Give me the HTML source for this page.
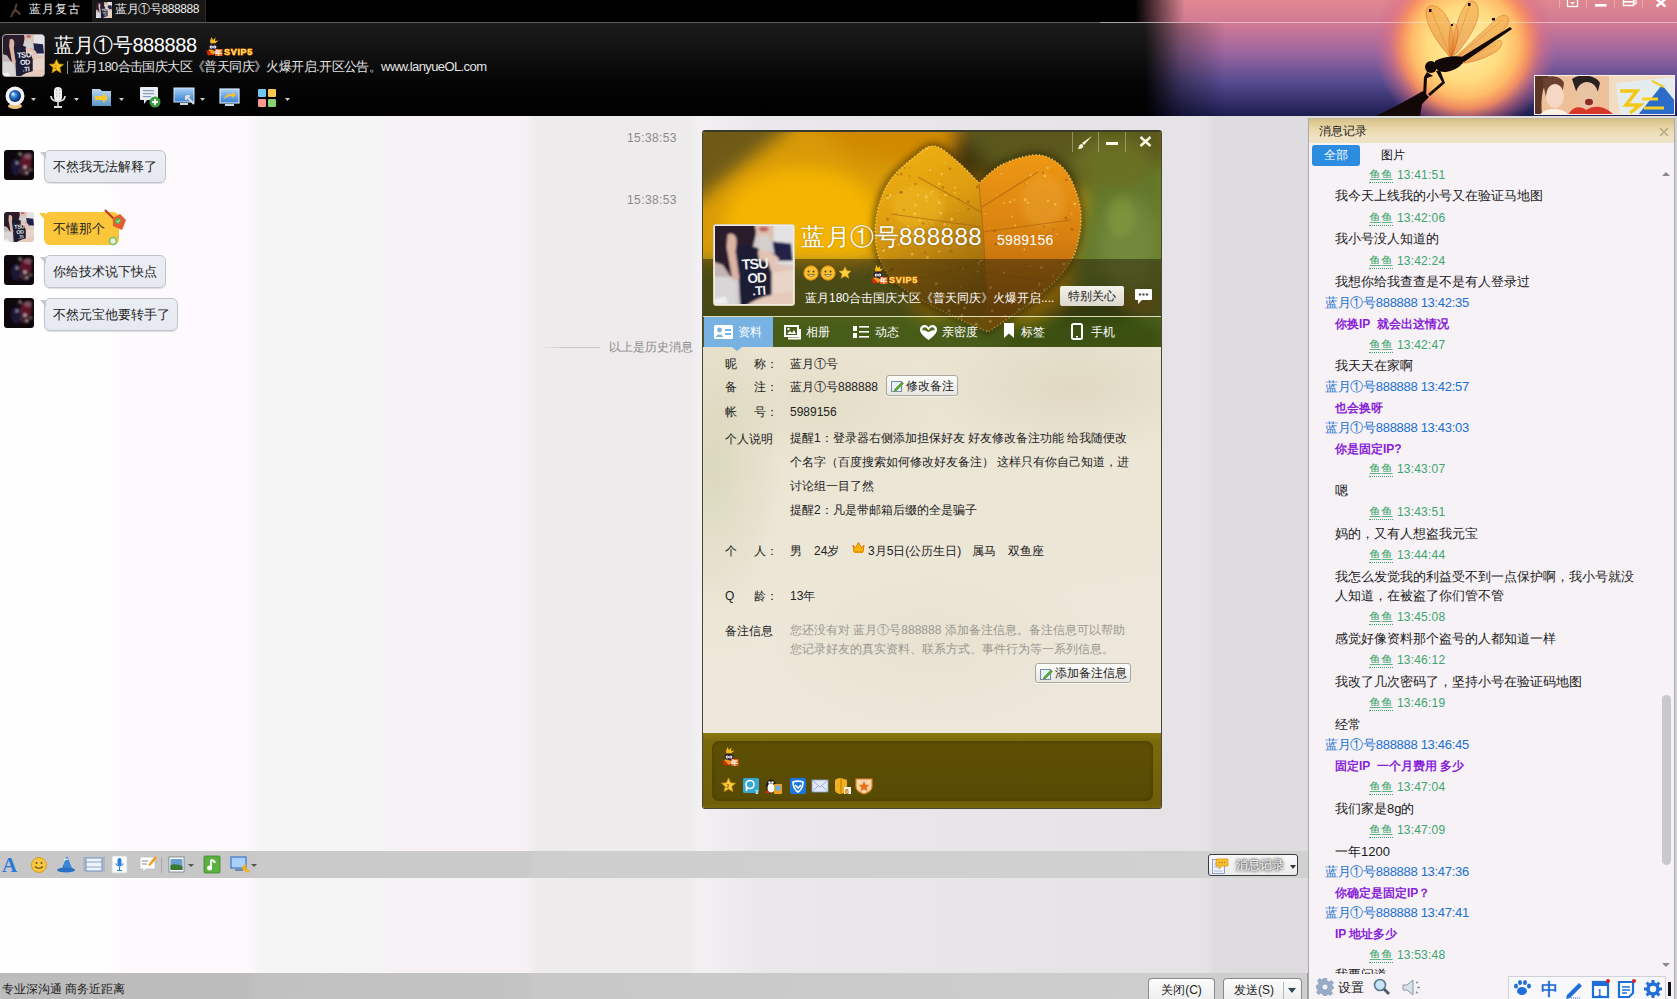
<!DOCTYPE html>
<html><head><meta charset="utf-8">
<style>
*{box-sizing:border-box;margin:0;padding:0}
html,body{width:1677px;height:999px;overflow:hidden;font-family:"Liberation Sans",sans-serif;font-size:13px;color:#222}
.a{position:absolute}
#hdr{left:0;top:0;width:1677px;height:116px;background:#000;overflow:hidden}
#chat{left:0;top:116px;width:1308px;height:735px;background:linear-gradient(90deg,#fefefe 0,#fefefe 108px,#fdf9fd 124px,#fdf9fd 245px,#f6f5f6 260px,#f6f5f6 380px,#f5f1f4 392px,#f5f1f4 525px,#eeebed 537px,#eeebed 690px,#f2f0f2 700px,#ebe8eb 760px,#e8e5e8 1000px,#e6e3e6 1162px,#e6e3e6 1205px,#dfdcdf 1215px,#dfdcdf 1308px)}
#tb2{left:0;top:851px;width:1308px;height:27px;background:linear-gradient(90deg,#c8c7c8 0,#c8c7c8 245px,#cacaca 260px,#cbcacb 525px,#cfcecf 537px,#d2d1d2 1308px)}
#inp{left:0;top:878px;width:1308px;height:95px;background:linear-gradient(90deg,#fefefe 0,#fefefe 108px,#fdf9fd 124px,#fdf9fd 245px,#f6f5f6 260px,#f6f5f6 380px,#f5f1f4 392px,#f5f1f4 525px,#eeebed 537px,#eeebed 690px,#f2f0f2 700px,#ebe8eb 760px,#e8e5e8 1000px,#e6e3e6 1162px,#e6e3e6 1205px,#dfdcdf 1215px,#dfdcdf 1308px)}
#bot{left:0;top:973px;width:1308px;height:26px;background:linear-gradient(90deg,#bdbcbd 0,#bdbcbd 245px,#c2c1c2 260px,#c4c3c4 525px,#c9c8c9 537px,#d0cfd0 1308px)}
#rp{left:1308px;top:116px;width:369px;height:883px;background:#f6f3f6}
#card{left:702px;top:130px;width:460px;height:679px}

.av{left:4px;width:30px;height:30px;border-radius:3px;background:radial-gradient(circle at 60% 45%,#6a2a30 0,#3a1820 40%,#180c12 100%)}
.av2{left:4px;width:30px;height:30px;border-radius:3px;background:linear-gradient(150deg,#b8a0a0 0,#6a5058 40%,#2a2035 60%,#c8b8b0 100%)}
.bub{left:44px;height:33px;border:1px solid #bfc4cc;border-radius:6px;background:linear-gradient(180deg,#eceef5,#e6e9f0);box-shadow:0 1px 1px rgba(0,0,0,.12);padding-left:8px;line-height:31px;font-size:13px;color:#222;white-space:nowrap}
.bub::before{content:"";position:absolute;left:-5px;top:1px;width:0;height:0;border-left:6px solid transparent;border-top:7px solid #c4c8d0}
.bubY{left:44px;height:33px;border-radius:6px;background:#fcc63a;padding-left:9px;line-height:33px;font-size:13px;color:#222;white-space:nowrap}
.bubY::before{content:"";position:absolute;left:-5px;top:1px;border-left:6px solid transparent;border-top:7px solid #fcc63a}

.rg{left:61px;height:20px;line-height:22px;font-size:12px;color:#3da56d;white-space:nowrap;letter-spacing:0.2px}
.yu{border-bottom:1px dotted #3da56d}
.rb{left:17px;height:20px;line-height:20px;font-size:13px;color:#2070d0;white-space:nowrap;letter-spacing:-0.3px}
.rpur{left:27px;height:20px;line-height:20px;font-size:12px;font-weight:bold;color:#8a1fd8;white-space:nowrap}
.rk{left:27px;height:20px;line-height:20px;font-size:13px;color:#1a1a1a;white-space:nowrap}

.tab{top:186px;height:31px;display:flex;align-items:center}
.ti{display:inline-block;box-sizing:border-box}
.tabt{top:185px;line-height:30px;color:#fff;font-size:12px}
.t12{font-size:12px;line-height:18px;color:#222;white-space:nowrap}
.lbl{left:23px;font-size:12px;line-height:18px;color:#222;white-space:nowrap}
.val{left:88px;font-size:12px;line-height:18px;color:#222;white-space:nowrap}
.btn{border:1px solid #a8a8a0;border-radius:3px;background:linear-gradient(#fdfdfb,#e8e6e0);font-size:12px;line-height:18px;color:#222;box-shadow:0 1px 0 rgba(255,255,255,.6)}
.ic{top:647px;width:16px;height:16px;border-radius:2px}
.bbtn{height:24px;border:1px solid #8a8a8a;border-radius:4px 4px 0 0;border-bottom:none;background:linear-gradient(#fdfdfd,#ececec);font-size:12px;line-height:22px;text-align:center;color:#222}
</style></head><body>
<svg width="0" height="0" style="position:absolute"><defs>
<symbol id="girl" viewBox="0 0 80 80">
 <filter id="bl" x="-10%" y="-10%" width="120%" height="120%"><feGaussianBlur stdDeviation="1.3"/></filter>
 <g filter="url(#bl)">
 <rect x="-4" y="-4" width="88" height="88" fill="#d4ccd0"/>
 <path d="M-4 28 L22 30 L22 84 H-4Z" fill="#c4b4b4"/>
 <path d="M-4 52 H22 V84 H-4Z" fill="#d8d6d6"/>
 <path d="M-4 -4 H44 C42 10 40 20 36 30 L26 48 L16 52 L8 40 L-4 36Z" fill="#2c1e2c"/>
 <path d="M40 -4 H62 V14 L44 14Z" fill="#dcc0b0"/>
 <ellipse cx="50" cy="3" rx="5" ry="2.6" fill="#c06068"/>
 <path d="M60 -4 H84 V40 L60 38Z" fill="#e4e2e4"/>
 <path d="M59 16 L78 18 L80 36 L62 36Z" fill="#24244a"/>
 <path d="M22 18 C30 20 40 20 46 24 L60 28 L62 44 L60 84 H26 L24 50Z" fill="#1c1a34"/>
 <path d="M13 9 C18 6 23 10 22 18 L21 26 L25 54 L18 56 C16 44 14 32 12 22Z" fill="#dcb4a4"/>
 <rect x="45" y="10" width="11" height="17" rx="2" fill="#d4d0cc"/>
 <path d="M44 26 C50 24 60 26 66 34 L60 40 C56 36 50 36 45 34Z" fill="#e4c4b4"/>
 <path d="M54 36 L80 42 V50 L58 48Z" fill="#e2c6b8"/>
 <path d="M58 48 L84 44 V84 H58Z" fill="#e8d4c8"/>
 <path d="M30 84 C40 74 56 70 84 66 V84Z" fill="#e6cabc"/>
 <path d="M-2 76 L10 72 L14 80 H-2Z" fill="#f0f0f0"/>
 </g>
 <g font-family="Liberation Sans" font-weight="bold" fill="#eeeeee" transform="rotate(-4 42 50)">
 <text x="28" y="44" font-size="15" letter-spacing="-1">TSU</text>
 <text x="33" y="58" font-size="14" letter-spacing="-1">OD</text>
 <text x="37" y="71" font-size="13" letter-spacing="-.5">.TI</text>
 </g>
</symbol>
<symbol id="svip" viewBox="0 0 50 20">
 <path d="M7 5 L8.5 1 L10 4 L12.5 1.5 L12 5 L15.5 4.5 L12 7.5 H7.5Z" fill="#f8b818"/>
 <ellipse cx="10" cy="11" rx="4.5" ry="3.5" fill="#2a2030"/>
 <circle cx="8.3" cy="11" r="1.6" fill="#fff"/><circle cx="11.7" cy="11" r="1.6" fill="#fff"/><circle cx="8.3" cy="11" r=".6" fill="#222"/><circle cx="11.7" cy="11" r=".6" fill="#222"/>
 <path d="M3 14 L12 18.5 L5 19.5 Z" fill="#d82808"/><path d="M5 14 C8 13 11 14 13 16 L10 19 Z" fill="#f89818"/>
 <path d="M12 13 H19.5 V20 H12Z" fill="#e86010"/>
 <text x="12.3" y="19.2" font-size="7" font-weight="bold" font-family="Liberation Sans" fill="#fff">年</text>
 <text x="21" y="18.5" font-size="9" font-weight="bold" font-family="Liberation Sans" fill="#ffe070" stroke="#e87000" stroke-width="1" paint-order="stroke" letter-spacing=".7">SVIP5</text>
</symbol>
<symbol id="dark" viewBox="0 0 30 30">
 <filter id="bd"><feGaussianBlur stdDeviation=".9"/></filter>
 <rect width="30" height="30" fill="#0e070c"/>
 <g filter="url(#bd)">
 <ellipse cx="12" cy="17" rx="5" ry="9" fill="#1e1a3a" opacity=".9"/>
 <ellipse cx="22" cy="12" rx="6" ry="8" fill="#6a1a30" opacity=".85"/>
 <ellipse cx="24" cy="6" rx="4" ry="3" fill="#9a6a78" opacity=".7"/>
 <ellipse cx="20" cy="21" rx="5" ry="4" fill="#4a2a38" opacity=".8"/>
 <circle cx="16" cy="4" r="1.8" fill="#c0c0b0" opacity=".7"/>
 <circle cx="13" cy="13" r="1.4" fill="#d0d0e0" opacity=".7"/>
 <circle cx="21" cy="17" r="1.6" fill="#f0e8e8" opacity=".8"/>
 <circle cx="23" cy="23" r="1.5" fill="#e8e0e0" opacity=".7"/>
 <circle cx="27" cy="20" r="1.5" fill="#c8a8a0" opacity=".6"/>
 </g>
</symbol>
</defs></svg>

<div id="hdr" class="a">
 <div class="a" style="left:0;top:0;width:1677px;height:22px;background:#000"></div>
 <div class="a" style="left:0;top:22px;width:1677px;height:94px;background:linear-gradient(180deg,#1d1d1d 0,#111 30px,#050505 60px,#000 94px)"></div>
 <div class="a" style="left:0;top:22px;width:1677px;height:1px;background:#5a5a5a"></div>
 <!-- sky -->
 <svg class="a" style="left:1100px;top:0" width="577" height="116" viewBox="1100 0 577 116">
  <defs>
   <linearGradient id="sk" x1="0" y1="0" x2="0" y2="1"><stop offset="0" stop-color="#e08890"/><stop offset=".2" stop-color="#d27a94"/><stop offset=".45" stop-color="#9c66a0"/><stop offset=".7" stop-color="#584c90"/><stop offset="1" stop-color="#1c1c50"/></linearGradient>
   <linearGradient id="fadeL" x1="0" y1="0" x2="1" y2="0"><stop offset="0" stop-color="#000" stop-opacity="1"/><stop offset=".35" stop-color="#000" stop-opacity=".85"/><stop offset="1" stop-color="#000" stop-opacity="0"/></linearGradient>
   <radialGradient id="sun" cx="1465" cy="44" r="92" gradientUnits="userSpaceOnUse"><stop offset="0" stop-color="#fff0a8"/><stop offset=".4" stop-color="#ffdc80"/><stop offset=".58" stop-color="#ffbc68"/><stop offset=".7" stop-color="#f89060" stop-opacity=".95"/><stop offset=".84" stop-color="#e07080" stop-opacity=".5"/><stop offset="1" stop-color="#c06890" stop-opacity="0"/></radialGradient>
   <linearGradient id="mL" x1="1145" y1="0" x2="1225" y2="0" gradientUnits="userSpaceOnUse"><stop offset="0" stop-color="#fff" stop-opacity="0"/><stop offset=".45" stop-color="#fff" stop-opacity=".65"/><stop offset="1" stop-color="#fff" stop-opacity="1"/></linearGradient>
   <linearGradient id="mT" x1="1135" y1="0" x2="1185" y2="0" gradientUnits="userSpaceOnUse"><stop offset="0" stop-color="#fff" stop-opacity="0"/><stop offset="1" stop-color="#fff" stop-opacity="1"/></linearGradient>
   <mask id="mk" maskUnits="userSpaceOnUse" x="1100" y="0" width="577" height="116"><rect x="1100" y="0" width="577" height="22" fill="url(#mT)"/><rect x="1100" y="22" width="577" height="94" fill="url(#mL)"/></mask>
   <linearGradient id="wing" x1="0" y1="1" x2="0" y2="0"><stop offset="0" stop-color="#e07020" stop-opacity=".55"/><stop offset="1" stop-color="#f0a040" stop-opacity=".45"/></linearGradient>
  </defs>
  <g mask="url(#mk)"><rect x="1100" y="0" width="577" height="116" fill="url(#sk)"/>
  <rect x="1100" y="0" width="577" height="116" fill="url(#sun)"/></g>
  <rect x="1100" y="22" width="577" height="1" fill="#fff" opacity=".45"/>
  <g fill="url(#wing)" stroke="#c85a18" stroke-width=".6" stroke-opacity=".7">
   <path d="M1449 56 C1440 46 1425 26 1426 11 C1427 3 1438 4 1445 14 C1454 28 1456 45 1452 56Z"/>
   <path d="M1451 55 C1452 40 1458 13 1467 3 C1474 -3 1480 5 1478 17 C1474 33 1462 48 1453 57Z"/>
   <path d="M1450 56 C1448 46 1449 32 1451 25 C1453 21 1457 24 1458 30 C1458 40 1455 50 1451 57Z"/>
   <path d="M1454 58 C1468 46 1487 27 1499 17 C1507 12 1512 19 1506 27 C1494 41 1474 54 1456 61Z"/>
   <path d="M1456 61 C1470 56 1487 47 1497 41 C1503 38 1504 45 1497 51 C1485 59 1469 64 1457 63Z"/>
  </g>
  <g stroke="#c86018" stroke-width=".5" opacity=".6" fill="none"><path d="M1450 55 L1432 12 M1452 55 L1470 5 M1455 59 L1502 20 M1458 62 L1496 45"/></g>
  <g fill="#130808">
   <circle cx="1431" cy="67" r="6"/>
   <path d="M1435 61 C1442 57 1455 55 1464 57 C1466 62 1458 70 1446 72 C1440 72 1436 70 1435 66Z"/>
   <path d="M1460 58 L1510 27 L1512 29 L1464 62Z"/>
   <path d="M1427 72 L1424 77 L1423 96 L1426 96 L1427 78 L1433 76Z"/>
   <path d="M1436 71 L1442 82 L1428 94 L1430 96 L1445 83 L1440 70Z"/>
   <path d="M1376 116 C1392 108 1408 100 1423 91 L1429 97 L1422 104 L1420 116Z"/>
   <rect x="1429" y="9" width="2.5" height="3"/><rect x="1468" y="3" width="2.5" height="3"/><rect x="1451" y="24" width="2" height="2"/><rect x="1492" y="18" width="3" height="2.5"/>
  </g>
 </svg>
 <svg class="a" style="left:1534px;top:75px" width="141" height="40" viewBox="0 0 141 40">
  <rect width="141" height="40" fill="#f2dcc4"/>
  <rect x="0" y="0" width="75" height="40" fill="#eec09a"/>
  <path d="M0 0 H16 C10 8 6 20 8 40 H0Z" fill="#5a3424"/>
  <path d="M8 4 C14 0 26 0 30 8 L28 20 L12 22Z" fill="#6a4030"/>
  <ellipse cx="21" cy="21" rx="9" ry="12" fill="#f4d8c4"/>
  <path d="M6 40 C10 32 30 32 34 40Z" fill="#faf0e4"/>
  <path d="M38 4 C46 -2 62 0 66 8 L64 16 L42 16Z" fill="#2a2020"/>
  <ellipse cx="53" cy="20" rx="11" ry="13" fill="#e8c4a4"/>
  <ellipse cx="55" cy="27" rx="4" ry="3.2" fill="#902828"/>
  <path d="M34 40 C38 32 46 30 52 35 C60 30 70 30 80 40Z" fill="#d8382a"/>
  <path d="M82 8 L141 2 V40 H86Z" fill="#e4ecf0"/>
  <path d="M104 40 L128 10 L141 26 V40Z" fill="#2c6cc8"/>
  <path d="M86 16 H103 L92 30 H106 L96 38" stroke="#f2c818" stroke-width="3.5" fill="none"/>
  <path d="M108 24 H124 M110 33 H130" stroke="#f8d020" stroke-width="3"/>
  <path d="M118 6 L130 12" stroke="#f0d030" stroke-width="2.5"/>
  <rect x=".5" y=".5" width="140" height="39" fill="none" stroke="#f8f0e8" stroke-width="1"/>
 </svg>
  <!-- wtabs -->
 <div class="a" style="left:92px;top:0;width:114px;height:22px;background:#171717;border-right:1px solid #2a2a2a;border-left:1px solid #1a1a1a"></div>
 <svg class="a" style="left:9px;top:3px" width="16" height="15" viewBox="0 0 16 15"><path d="M8 1 C6 3 7 5 6 7 C4 9 3 11 2 14 M6 7 C8 8 10 9 11 12" stroke="#5a4030" stroke-width="2" fill="none"/></svg>
 <div class="a" style="left:29px;top:1px;color:#ececec;font-size:12px;line-height:16px;letter-spacing:1px">蓝月复古</div>
 <svg class="a" style="left:96px;top:2px" width="16" height="16"><use href="#girl"/></svg>
 <div class="a" style="left:115px;top:1px;color:#ececec;font-size:12px;line-height:16px;letter-spacing:-0.4px">蓝月①号888888</div>
 <!-- window controls -->
 <svg class="a" style="left:1555px;top:0" width="122" height="12" viewBox="0 0 122 12">
  <g stroke="rgba(255,255,255,.3)" stroke-width="1"><path d="M4.5 0V8M31.5 0V8M59.5 0V8M87.5 0V8"/></g>
  <rect x="12.5" y="-1" width="10" height="7.5" fill="none" stroke="#fff" stroke-width="1.3"/><path d="M15 2 L20 2 L17.5 4.5Z" fill="#fff"/>
  <rect x="40" y="4" width="11.5" height="2.6" fill="#fff"/>
  <rect x="68.5" y="-1" width="10" height="6.5" fill="none" stroke="#fff" stroke-width="1.4"/><rect x="68.5" y="1" width="10" height="1.6" fill="#fff"/><path d="M79 -1 V4 H81 V-1" fill="none" stroke="#fff" stroke-width="1.2"/>
  <path d="M101.5 -1 L110.5 6.5 M110.5 -1 L101.5 6.5" stroke="#fff" stroke-width="2.4"/>
 </svg>
 <!-- avatar + name -->
 <div class="a" style="left:2px;top:34px;width:43px;height:43px;border:1px solid #a8a0a0;border-radius:4px;overflow:hidden;background:#ddd"><svg width="41" height="41" style="display:block"><use href="#girl"/></svg></div>
 <div class="a" style="left:54px;top:31px;color:#fff;font-size:20px;line-height:28px;letter-spacing:-0.4px">蓝月①号888888</div>
 <svg class="a" style="left:203px;top:36px" width="50" height="20"><use href="#svip"/></svg>
 <svg class="a" style="left:49px;top:59px" width="15" height="15" viewBox="0 0 15 15"><path d="M7.5 0.5 L9.6 5 L14.5 5.4 L10.8 8.6 L12 13.8 L7.5 11 L3 13.8 L4.2 8.6 L0.5 5.4 L5.4 5Z" fill="#f8c820" stroke="#c88a00" stroke-width=".8"/><text x="5" y="10" font-size="5" font-family="Liberation Sans" fill="#a05000">2</text></svg>
 <div class="a" style="left:67px;top:61px;width:1px;height:13px;background:#8a9aa8"></div>
 <div class="a" style="left:73px;top:58px;color:#e4e4e4;font-size:13px;line-height:18px;letter-spacing:-0.6px">蓝月180合击国庆大区《普天同庆》火爆开启.开区公告。www.lanyueOL.com</div>
 <!-- toolbar -->
 <svg class="a" style="left:0;top:84px" width="300" height="28" viewBox="0 0 300 28">
  <defs><radialGradient id="cam" cx=".4" cy=".4" r=".6"><stop offset="0" stop-color="#7ac0ff"/><stop offset=".6" stop-color="#1a5ab0"/><stop offset="1" stop-color="#0a2a60"/></radialGradient>
  <linearGradient id="fold" x1="0" y1="0" x2="0" y2="1"><stop offset="0" stop-color="#b8d8f0"/><stop offset="1" stop-color="#5a98c8"/></linearGradient>
  <linearGradient id="mon" x1="0" y1="0" x2="0" y2="1"><stop offset="0" stop-color="#a8d0f8"/><stop offset="1" stop-color="#3a80d0"/></linearGradient></defs>
  <ellipse cx="15" cy="22" rx="7" ry="3" fill="#e8c080"/>
  <circle cx="15" cy="12" r="9.5" fill="#f4f4f4"/><circle cx="15" cy="12" r="6" fill="url(#cam)"/><circle cx="13" cy="10" r="1.5" fill="#cfe8ff"/>
  <path d="M31 14 L36 14 L33.5 17Z" fill="#ccc"/>
  <rect x="54" y="3" width="8" height="14" rx="4" fill="#f0f0f0"/><g fill="#888"><circle cx="56.5" cy="6" r=".6"/><circle cx="59.5" cy="6" r=".6"/><circle cx="56.5" cy="9" r=".6"/><circle cx="59.5" cy="9" r=".6"/><circle cx="56.5" cy="12" r=".6"/><circle cx="59.5" cy="12" r=".6"/></g>
  <path d="M51 12 C51 19 65 19 65 12" stroke="#ddd" stroke-width="1.8" fill="none"/><rect x="57.2" y="18" width="1.6" height="4" fill="#ddd"/><rect x="54" y="22" width="8" height="2" fill="#ddd"/>
  <path d="M74 14 L79 14 L76.5 17Z" fill="#ccc"/>
  <path d="M92 5 H100 L102 7 H111 V22 H92Z" fill="url(#fold)"/><path d="M95 12 H103 V9 L108 14 L103 19 V16 H95Z" fill="#f8c830"/>
  <path d="M119 14 L124 14 L121.5 17Z" fill="#ccc"/>
  <path d="M141 3 H157 Q158 3 158 4 V15 Q158 16 157 16 H147 L144 20 V16 H141 Q140 16 140 15 V4 Q140 3 141 3Z" fill="#e8eef6"/><g fill="#8a9ab0"><rect x="143" y="6" width="11" height="1.2"/><rect x="143" y="9" width="11" height="1.2"/><rect x="143" y="12" width="8" height="1.2"/></g>
  <circle cx="155" cy="18" r="5.5" fill="#3aa040"/><path d="M155 15 V21 M152 18 H158" stroke="#fff" stroke-width="2"/>
  <rect x="174" y="4" width="20" height="14" fill="url(#mon)" stroke="#d8e8f8" stroke-width="1"/><rect x="180" y="19" width="8" height="2" fill="#c8d8e8"/><path d="M186 12 L194 20 M186 12 H190 M186 12 V16" stroke="#ddd" stroke-width="2"/>
  <path d="M200 14 L205 14 L202.5 17Z" fill="#ccc"/>
  <rect x="220" y="5" width="19" height="14" fill="url(#mon)" stroke="#d8e8f8" stroke-width="1.2"/><rect x="225" y="20" width="9" height="2" fill="#c8d8e8"/><path d="M224 15 C225 11 228 10 232 10 V8 L236 11 L232 14 V12 C229 12 226 13 224 15Z" fill="#f8c030"/>
  <rect x="258" y="5" width="8" height="8" rx="1" fill="#70c8f0"/><rect x="268" y="5" width="8" height="8" rx="1" fill="#f8c850"/><rect x="258" y="15" width="8" height="8" rx="1" fill="#f89890"/><rect x="268" y="15" width="8" height="8" rx="1" fill="#88d070"/>
  <path d="M285 14 L290 14 L287.5 17Z" fill="#ccc"/>
 </svg>
</div>
<div id="chat" class="a">
 <div class="a" style="left:627px;top:14px;color:#8a8a8a;font-size:12px;line-height:16px;letter-spacing:.4px">15:38:53</div>
 <div class="a" style="left:627px;top:76px;color:#8a8a8a;font-size:12px;line-height:16px;letter-spacing:.4px">15:38:53</div>
 <svg class="a" style="left:4px;top:34px;border-radius:3px" width="30" height="30"><use href="#dark"/></svg>
 <div class="bub a" style="top:34px;width:122px">不然我无法解释了</div>
 <svg class="a" style="left:4px;top:96px;border-radius:3px" width="30" height="30"><use href="#girl"/></svg>
 <div class="bubY a" style="top:96px;width:75px">不懂那个</div>
 <svg class="a" style="left:103px;top:92px" width="24" height="38" viewBox="0 0 24 38"><path d="M2 2 L14 14" stroke="#c03a20" stroke-width="2.2"/><path d="M10 10 L17 6 L23 12 L19 22 L10 18Z" fill="#e85a30"/><circle cx="15" cy="13" r="3" fill="#5ab040"/><path d="M13.5 13 L14.8 14.2 L16.8 11.8" stroke="#fff" stroke-width=".9" fill="none"/><circle cx="10" cy="33" r="3.5" fill="#e8f0e0" stroke="#78c060" stroke-width="1.6"/><circle cx="14.5" cy="29" r="1" fill="#9ad080"/></svg>
 <svg class="a" style="left:4px;top:139px;border-radius:3px" width="30" height="30"><use href="#dark"/></svg>
 <div class="bub a" style="top:139px;width:122px">你给技术说下快点</div>
 <svg class="a" style="left:4px;top:182px;border-radius:3px" width="30" height="30"><use href="#dark"/></svg>
 <div class="bub a" style="top:182px;width:134px">不然元宝他要转手了</div>
 <div class="a" style="left:540px;top:231px;width:60px;height:1px;background:linear-gradient(90deg,rgba(200,200,200,0),#c8c8c8 40%,#c8c8c8)"></div>
 <div class="a" style="left:609px;top:223px;color:#8a8a8a;font-size:12px;line-height:16px">以上是历史消息</div>
</div>
<div id="tb2" class="a">
 <svg class="a" style="left:0;top:0" width="270" height="27" viewBox="0 0 270 27">
  <text x="2" y="21" font-family="Liberation Serif" font-weight="bold" font-size="21" fill="#2a78d8">A</text>
  <circle cx="39" cy="14" r="7.5" fill="#f8c840" stroke="#d89a20" stroke-width="1"/><circle cx="36.5" cy="12" r="1" fill="#6a4a10"/><circle cx="41.5" cy="12" r="1" fill="#6a4a10"/><path d="M35 15.5 Q39 19 43 15.5" stroke="#6a4a10" stroke-width="1.1" fill="none"/>
  <path d="M58 19 Q66 22 75 19 L72 17 L67 5 L62 17Z" fill="#3a88d8"/><ellipse cx="66" cy="19" rx="9" ry="2.5" fill="#2a70c0"/><path d="M64 9 L68 8" stroke="#fff" stroke-width="1"/>
  <rect x="86" y="7" width="16" height="13" fill="#f0f4fa" stroke="#6a90c0" stroke-width="1"/><path d="M86 11 H102 M86 16 H102" stroke="#6a90c0" stroke-width=".8"/><path d="M84 6 V21 M104 6 V21" stroke="#6a90c0" stroke-width="1" stroke-dasharray="1.5 1"/>
  <rect x="112" y="5" width="15" height="17" rx="1" fill="#fff" stroke="#c8d0d8" stroke-width=".8"/><rect x="117.5" y="7" width="4" height="8" rx="2" fill="#2a80d8"/><path d="M115.5 12.5 Q119.5 18 123.5 12.5 M119.5 16 V19 M117 19.5 H122" stroke="#2a80d8" stroke-width="1.2" fill="none"/>
  <path d="M140 6 H155 V18 H146 L143 21 V18 H140Z" fill="#fff" stroke="#b8c0c8" stroke-width=".8"/><path d="M142 10 H148 M142 13 H147" stroke="#7a8a9a" stroke-width="1"/><path d="M148 14 L155 5 L157 7 L150 15Z" fill="#f0a020"/>
  <rect x="161" y="6" width="1" height="16" fill="#a8a8a8"/>
  <rect x="169" y="6" width="15" height="15" fill="#fff" stroke="#6a7a8a" stroke-width=".8"/><rect x="170.5" y="8" width="12" height="11" fill="#6aa0d0"/><path d="M170.5 19 V14 Q175 12 182.5 15 V19Z" fill="#3a7a30"/>
  <path d="M188 13 L194 13 L191 16Z" fill="#555"/>
  <rect x="204" y="5" width="16" height="17" rx="1" fill="#5ab040" stroke="#3a8a28" stroke-width=".8"/><path d="M211 9 V17 M211 9 Q214 9 215 12" stroke="#fff" stroke-width="1.8" fill="none"/><circle cx="209.5" cy="17" r="2.5" fill="#fff"/>
  <rect x="231" y="6" width="15" height="11" fill="#a8d0f8" stroke="#3a78c8" stroke-width="1.2"/><rect x="235" y="18" width="8" height="2" fill="#6a8ab0"/><path d="M243 15 L249 21 M246 14 L243 17 L247 21" stroke="#f0b020" stroke-width="2" fill="none"/>
  <path d="M251 13 L257 13 L254 16Z" fill="#555"/>
 </svg>
 <div class="a" style="left:1208px;top:3px;width:90px;height:22px;border:1px solid #3a3a3a;border-radius:3px;background:linear-gradient(#fafafa,#ebebeb)"></div>
 <svg class="a" style="left:1212px;top:7px" width="17" height="16" viewBox="0 0 17 16"><rect x=".5" y="1.5" width="12" height="14" fill="#eef2fa" stroke="#7a90c0" stroke-width=".8"/><path d="M2 6 H6 M2 9 H6 M2 13 H10" stroke="#9aaad0" stroke-width=".8"/><path d="M4 1 H16 V8 H10 L7 11 V8 H4Z" fill="#f8c030" stroke="#d89010" stroke-width=".7"/><g fill="#8a5a00"><circle cx="7.5" cy="4.5" r=".6"/><circle cx="10" cy="4.5" r=".6"/><circle cx="12.5" cy="4.5" r=".6"/></g></svg>
 <div class="a" style="left:1236px;top:6px;color:#fff;font-size:12px;line-height:16px;text-shadow:0 0 2px #444,0 0 3px #555,0 0 4px #777">消息记录</div>
 <div class="a" style="left:1290px;top:14px;border-left:3px solid transparent;border-right:3px solid transparent;border-top:4px solid #333"></div>
</div>
<div id="inp" class="a"></div>
<div id="bot" class="a">
 <div class="a" style="left:2px;top:8px;color:#222;font-size:12px;line-height:16px">专业深沟通 商务近距离</div>
 <div class="a bbtn" style="left:1148px;top:5px;width:67px">关闭(C)</div>
 <div class="a bbtn" style="left:1223px;top:5px;width:79px;text-align:left;padding-left:10px">发送(S)</div>
 <div class="a" style="left:1283px;top:9px;width:1px;height:17px;background:#b8b8b8"></div>
 <div class="a" style="left:1288px;top:15px;border-left:4px solid transparent;border-right:4px solid transparent;border-top:5px solid #2a4a5a"></div>
 <div class="a" style="left:1307px;top:0;width:1px;height:26px;background:#9a9a9c"></div>
</div>
<div id="rp" class="a">
 <div class="a" style="left:0;top:0;width:369px;height:3px;background:#dcdcdc"></div>
 <div class="a" style="left:0;top:2px;width:1px;height:881px;background:#a9a9ab"></div>
 <div class="a" style="left:366px;top:2px;width:1px;height:881px;background:#a9a9ab"></div>
 <div class="a" style="left:367px;top:0;width:2px;height:883px;background:#d2d1d4"></div><div class="a" style="left:365px;top:27px;width:1px;height:831px;background:#fff"></div>
 <div class="a" style="left:1px;top:2px;width:365px;height:25px;background:linear-gradient(180deg,#c9b890 0,#dcc68e 3px,#e8d6a8 10px,#f0e2c0 18px,#efe3c8 25px)"></div>
 <div class="a" style="left:11px;top:8px;font-size:12px;line-height:14px;color:#222">消息记录</div>
 <svg class="a" style="left:351px;top:11px" width="10" height="10" viewBox="0 0 10 10"><path d="M1 1 L9 9 M9 1 L1 9" stroke="#b8a888" stroke-width="1.6"/></svg>
 <div class="a" style="left:1px;top:27px;width:365px;height:856px;background:#f6f2f6"></div>
 <div class="a" style="left:4px;top:29px;width:48px;height:21px;background:#2c8de0;border-radius:3px;color:#fff;font-size:12px;line-height:21px;text-align:center">全部</div>
 <div class="a" style="left:73px;top:31px;font-size:12px;line-height:17px;color:#111">图片</div>
 <div class="a" style="left:354px;top:56px;border-left:4px solid transparent;border-right:4px solid transparent;border-bottom:4px solid #8a8a8a"></div>
 <div class="a" style="left:354px;top:847px;border-left:4px solid transparent;border-right:4px solid transparent;border-top:4px solid #8a8a8a"></div>
 <div class="a" style="left:354px;top:579px;width:9px;height:170px;background:#c9c8cc;border-radius:5px"></div>
 <div class="a rg" style="top:48px"><span class="yu">鱼鱼</span> 13:41:51</div>
 <div class="a rk" style="top:70px">我今天上线我的小号又在验证马地图</div>
 <div class="a rg" style="top:91px"><span class="yu">鱼鱼</span> 13:42:06</div>
 <div class="a rk" style="top:113px">我小号没人知道的</div>
 <div class="a rg" style="top:134px"><span class="yu">鱼鱼</span> 13:42:24</div>
 <div class="a rk" style="top:156px">我想你给我查查是不是有人登录过</div>
 <div class="a rb" style="top:177px">蓝月①号888888 13:42:35</div>
 <div class="a rpur" style="top:197.5px">你换IP&nbsp;&nbsp;就会出这情况</div>
 <div class="a rg" style="top:217.5px"><span class="yu">鱼鱼</span> 13:42:47</div>
 <div class="a rk" style="top:240px">我天天在家啊</div>
 <div class="a rb" style="top:261px">蓝月①号888888 13:42:57</div>
 <div class="a rpur" style="top:281.5px">也会换呀</div>
 <div class="a rb" style="top:302px">蓝月①号888888 13:43:03</div>
 <div class="a rpur" style="top:323px">你是固定IP?</div>
 <div class="a rg" style="top:342px"><span class="yu">鱼鱼</span> 13:43:07</div>
 <div class="a rk" style="top:365px">嗯</div>
 <div class="a rg" style="top:385px"><span class="yu">鱼鱼</span> 13:43:51</div>
 <div class="a rk" style="top:408px">妈的，又有人想盗我元宝</div>
 <div class="a rg" style="top:428px"><span class="yu">鱼鱼</span> 13:44:44</div>
 <div class="a rk" style="top:451px">我怎么发觉我的利益受不到一点保护啊，我小号就没</div>
 <div class="a rk" style="top:470px">人知道，在被盗了你们管不管</div>
 <div class="a rg" style="top:490px"><span class="yu">鱼鱼</span> 13:45:08</div>
 <div class="a rk" style="top:513px">感觉好像资料那个盗号的人都知道一样</div>
 <div class="a rg" style="top:533px"><span class="yu">鱼鱼</span> 13:46:12</div>
 <div class="a rk" style="top:556px">我改了几次密码了，坚持小号在验证码地图</div>
 <div class="a rg" style="top:576px"><span class="yu">鱼鱼</span> 13:46:19</div>
 <div class="a rk" style="top:599px">经常</div>
 <div class="a rb" style="top:619px">蓝月①号888888 13:46:45</div>
 <div class="a rpur" style="top:640px">固定IP&nbsp;&nbsp;一个月费用 多少</div>
 <div class="a rg" style="top:660px"><span class="yu">鱼鱼</span> 13:47:04</div>
 <div class="a rk" style="top:683px">我们家是8g的</div>
 <div class="a rg" style="top:703px"><span class="yu">鱼鱼</span> 13:47:09</div>
 <div class="a rk" style="top:726px">一年1200</div>
 <div class="a rb" style="top:746px">蓝月①号888888 13:47:36</div>
 <div class="a rpur" style="top:767px">你确定是固定IP？</div>
 <div class="a rb" style="top:787px">蓝月①号888888 13:47:41</div>
 <div class="a rpur" style="top:808px">IP 地址多少</div>
 <div class="a rg" style="top:828px"><span class="yu">鱼鱼</span> 13:53:48</div>
 <div class="a rk" style="top:849px">我要问道</div>
 <div class="a" style="left:1px;top:858px;width:365px;height:25px;background:#f6f2f6"></div>
 <svg class="a" style="left:8px;top:862px" width="18" height="18" viewBox="0 0 18 18"><g transform="translate(9 9)" fill="#98acc8" stroke="#7890b0" stroke-width=".6"><path d="M-1.6 -8.5 H1.6 L2 -6 L4.3 -5 L6.3 -6.6 L8.5 -4.3 L6.9 -2.3 L7.7 0 L8.5 0 V1.6 L6.9 2 L6 4.3 L7.5 6.3 L5.3 8.5 L3.3 6.9 L1.6 7.7 V8.5 H-1.6 L-2 6.9 L-4.3 6 L-6.3 7.5 L-8.5 5.3 L-6.9 3.3 L-7.7 1.6 H-8.5 V-1.6 L-6.9 -2 L-6 -4.3 L-7.5 -6.3 L-5.3 -8.5 L-3.3 -6.9 L-2 -7.7Z"/><circle r="3" fill="#f0f4f8"/></g></svg>
 <div class="a" style="left:30px;top:863px;font-size:13px;line-height:17px;color:#222">设置</div>
 <svg class="a" style="left:65px;top:862px" width="18" height="18" viewBox="0 0 18 18"><circle cx="7" cy="7" r="5.5" fill="#c8e4f8" stroke="#5a7890" stroke-width="1.6"/><path d="M11 11 L16 16" stroke="#4a5a6a" stroke-width="2.8"/></svg>
 <svg class="a" style="left:94px;top:863px" width="20" height="17" viewBox="0 0 20 17"><path d="M1 6 H5 L11 1 V16 L5 11 H1Z" fill="#d8e0e8" stroke="#8a98a8" stroke-width="1"/><path d="M14 4 L16 3 M15 8.5 H18 M14 13 L16 14" stroke="#8a98a8" stroke-width="1.4"/></svg>
 <div class="a" style="left:200px;top:860px;width:158px;height:23px;background:#f8f8fa;border:1px solid #d0d0d8;border-bottom:none"></div>
 <svg class="a" style="left:204px;top:863px" width="160" height="20" viewBox="0 0 160 20">
  <g fill="#1f6fd8"><ellipse cx="10" cy="12" rx="5" ry="4"/><ellipse cx="4" cy="7" rx="2" ry="2.5"/><ellipse cx="8" cy="3.5" rx="2" ry="2.5"/><ellipse cx="13" cy="3.5" rx="2" ry="2.5"/><ellipse cx="17" cy="7" rx="2" ry="2.5"/></g>
  <text x="29" y="16" font-family="Liberation Sans" font-weight="bold" font-size="17" fill="#1f6fd8">中</text>
  <path d="M55 16 L67 4 L70 7 L58 19 L54 20Z" fill="#1f6fd8"/><path d="M59 19 H69" stroke="#1f6fd8" stroke-width="1" stroke-dasharray="1 1"/>
  <rect x="81" y="3" width="15" height="15" fill="#fff" stroke="#1f6fd8" stroke-width="2.2"/><rect x="81" y="3" width="15" height="4" fill="#1f6fd8"/><text x="85" y="17" font-family="Liberation Serif" font-weight="bold" font-size="10" fill="#1f6fd8">1</text><circle cx="96" cy="2" r="2" fill="#e02020"/>
  <path d="M107 3 H121 V14 L117 18 H107Z" fill="#fff" stroke="#1f6fd8" stroke-width="2.2"/><path d="M110 8 H118 M110 11 H118 M110 14 H115" stroke="#1f6fd8" stroke-width="1.4"/><circle cx="122" cy="2" r="2" fill="#e02020"/>
  <g transform="translate(141 10)"><circle r="5" fill="none" stroke="#1f6fd8" stroke-width="3.5"/><g stroke="#1f6fd8" stroke-width="3"><path d="M0 -9 V-6 M0 6 V9 M-9 0 H-6 M6 0 H9 M-6.4 -6.4 L-4.2 -4.2 M4.2 4.2 L6.4 6.4 M-6.4 6.4 L-4.2 4.2 M4.2 -4.2 L6.4 -6.4"/></g></g>
 </svg>
 <div class="a" style="left:360px;top:866px;width:3px;height:14px;background:#111"></div>
</div>
<div id="card" class="a">
 <div class="a" style="left:0;top:0;width:460px;height:679px;border:1px solid #4a4636;border-top:2px solid #3a3a2a;border-radius:3px;background:#ebe5d6;overflow:hidden">
  <!-- header image -->
  <svg class="a" style="left:0;top:0" width="458" height="215" viewBox="0 0 458 215">
   <defs>
    <filter id="b6" x="-50%" y="-50%" width="200%" height="200%"><feGaussianBlur stdDeviation="9"/></filter>
    <filter id="b3" x="-20%" y="-20%" width="140%" height="140%"><feGaussianBlur stdDeviation="3"/></filter>
    <filter id="b1"><feGaussianBlur stdDeviation="0.7"/></filter>
    <linearGradient id="lfL" x1="0" y1="0" x2="0.3" y2="1"><stop offset="0" stop-color="#f2b410"/><stop offset=".45" stop-color="#dc9c10"/><stop offset="1" stop-color="#8a5c0c"/></linearGradient>
    <linearGradient id="lfR" x1="0" y1="0" x2="0" y2="1"><stop offset="0" stop-color="#f09a14"/><stop offset=".5" stop-color="#d88010"/><stop offset="1" stop-color="#8a5008"/></linearGradient>
   </defs>
   <rect width="458" height="215" fill="#d89a08"/>
   <g filter="url(#b6)">
    <path d="M-20 -20 H105 L-20 80Z" fill="#6e5a16"/>
    <ellipse cx="100" cy="90" rx="80" ry="55" fill="#f4b400"/>
    <path d="M95 -20 H290 L250 40 L150 25Z" fill="#d08a04"/><ellipse cx="285" cy="22" rx="40" ry="28" fill="#3e3210"/>
    <path d="M240 -20 H470 V60 L380 60 L300 50Z" fill="#5a561c"/>
    <path d="M385 50 L470 30 V215 H360 L370 120Z" fill="#62782c"/>
    <ellipse cx="425" cy="110" rx="30" ry="45" fill="#72883a"/>
    <ellipse cx="410" cy="30" rx="40" ry="25" fill="#6a7020"/>
    <path d="M290 215 L400 150 L470 215Z" fill="#3a5018"/>
    <path d="M-20 130 H190 L240 230 H-20Z" fill="#6a7420"/><path d="M-20 185 H300 V230 H-20Z" fill="#587020"/><path d="M300 190 H470 V230 H300Z" fill="#4a6018"/>
   </g>
   <g filter="url(#b3)"><ellipse cx="435" cy="170" rx="20" ry="12" fill="#8a6a20" opacity=".7"/><ellipse cx="418" cy="85" rx="14" ry="20" fill="#98a840" opacity=".3"/></g>
   <path d="M276 51 C280.0 47.8 290.0 36.7 300.0 32.0 C310.0 27.3 325.7 22.0 336.0 23.0 C346.3 24.0 355.3 30.2 362.0 38.0 C368.7 45.8 373.5 59.7 376.0 70.0 C378.5 80.3 378.7 89.7 377.0 100.0 C375.3 110.3 373.0 121.2 366.0 132.0 C359.0 142.8 348.5 153.7 335.0 165.0 C321.5 176.3 293.3 194.2 285.0 200.0 C275.8 195.7 245.8 182.7 230.0 174.0 C214.2 165.3 199.3 157.3 190.0 148.0 C180.7 138.7 176.7 129.0 174.0 118.0 C171.3 107.0 172.0 93.3 174.0 82.0 C176.0 70.7 180.0 59.3 186.0 50.0 C192.0 40.7 202.5 32.0 210.0 26.0 C217.5 20.0 223.5 13.3 231.0 14.0 C238.5 14.7 247.5 23.8 255.0 30.0 C262.5 36.2 272.5 47.5 276.0 51.0 Z" fill="none" stroke="#2a2406" stroke-width="7" opacity=".55" filter="url(#b3)"/>
   <path d="M276 51 C280.0 47.8 290.0 36.7 300.0 32.0 C310.0 27.3 325.7 22.0 336.0 23.0 C346.3 24.0 355.3 30.2 362.0 38.0 C368.7 45.8 373.5 59.7 376.0 70.0 C378.5 80.3 378.7 89.7 377.0 100.0 C375.3 110.3 373.0 121.2 366.0 132.0 C359.0 142.8 348.5 153.7 335.0 165.0 C321.5 176.3 293.3 194.2 285.0 200.0 C275.8 195.7 245.8 182.7 230.0 174.0 C214.2 165.3 199.3 157.3 190.0 148.0 C180.7 138.7 176.7 129.0 174.0 118.0 C171.3 107.0 172.0 93.3 174.0 82.0 C176.0 70.7 180.0 59.3 186.0 50.0 C192.0 40.7 202.5 32.0 210.0 26.0 C217.5 20.0 223.5 13.3 231.0 14.0 C238.5 14.7 247.5 23.8 255.0 30.0 C262.5 36.2 272.5 47.5 276.0 51.0 Z" fill="url(#lfR)"/>
   <path d="M276 51 L281 110 L285 200 C275.8 195.7 245.8 182.7 230.0 174.0 C214.2 165.3 199.3 157.3 190.0 148.0 C180.7 138.7 176.7 129.0 174.0 118.0 C171.3 107.0 172.0 93.3 174.0 82.0 C176.0 70.7 180.0 59.3 186.0 50.0 C192.0 40.7 202.5 32.0 210.0 26.0 C217.5 20.0 223.5 13.3 231.0 14.0 C238.5 14.7 247.5 23.8 255.0 30.0 C262.5 36.2 272.5 47.5 276.0 51.0 Z" fill="url(#lfL)"/>
   <path d="M276 51 C280.0 47.8 290.0 36.7 300.0 32.0 C310.0 27.3 325.7 22.0 336.0 23.0 C346.3 24.0 355.3 30.2 362.0 38.0 C368.7 45.8 373.5 59.7 376.0 70.0 C378.5 80.3 378.7 89.7 377.0 100.0 C375.3 110.3 373.0 121.2 366.0 132.0 C359.0 142.8 348.5 153.7 335.0 165.0 C321.5 176.3 293.3 194.2 285.0 200.0 C275.8 195.7 245.8 182.7 230.0 174.0 C214.2 165.3 199.3 157.3 190.0 148.0 C180.7 138.7 176.7 129.0 174.0 118.0 C171.3 107.0 172.0 93.3 174.0 82.0 C176.0 70.7 180.0 59.3 186.0 50.0 C192.0 40.7 202.5 32.0 210.0 26.0 C217.5 20.0 223.5 13.3 231.0 14.0 C238.5 14.7 247.5 23.8 255.0 30.0 C262.5 36.2 272.5 47.5 276.0 51.0 Z" fill="none" stroke="#f8d060" stroke-width="1.6" stroke-dasharray="1.2 2.2" opacity=".85"/>
   <ellipse cx="215" cy="75" rx="26" ry="22" fill="#f8c830" opacity=".35" filter="url(#b3)"/>
   <ellipse cx="340" cy="70" rx="22" ry="26" fill="#eca838" opacity=".4" filter="url(#b3)"/>
   <clipPath id="lfc"><path d="M276 51 C280.0 47.8 290.0 36.7 300.0 32.0 C310.0 27.3 325.7 22.0 336.0 23.0 C346.3 24.0 355.3 30.2 362.0 38.0 C368.7 45.8 373.5 59.7 376.0 70.0 C378.5 80.3 378.7 89.7 377.0 100.0 C375.3 110.3 373.0 121.2 366.0 132.0 C359.0 142.8 348.5 153.7 335.0 165.0 C321.5 176.3 293.3 194.2 285.0 200.0 C275.8 195.7 245.8 182.7 230.0 174.0 C214.2 165.3 199.3 157.3 190.0 148.0 C180.7 138.7 176.7 129.0 174.0 118.0 C171.3 107.0 172.0 93.3 174.0 82.0 C176.0 70.7 180.0 59.3 186.0 50.0 C192.0 40.7 202.5 32.0 210.0 26.0 C217.5 20.0 223.5 13.3 231.0 14.0 C238.5 14.7 247.5 23.8 255.0 30.0 C262.5 36.2 272.5 47.5 276.0 51.0 Z"/></clipPath><g clip-path="url(#lfc)"><circle cx="238.7" cy="42.1" r="1.3" fill="#f8d870" opacity=".55"/><circle cx="282.4" cy="82.0" r="0.7" fill="#f8d870" opacity=".55"/><circle cx="179.7" cy="94.7" r="0.7" fill="#f8d870" opacity=".55"/><circle cx="259.5" cy="167.8" r="0.7" fill="#f8d870" opacity=".55"/><circle cx="301.3" cy="190.3" r="1.2" fill="#f8d870" opacity=".55"/><circle cx="373.1" cy="22.7" r="1.5" fill="#f8d870" opacity=".55"/><circle cx="201.7" cy="35.9" r="0.9" fill="#8a5010" opacity=".45"/><circle cx="209.2" cy="122.2" r="1.2" fill="#f8d870" opacity=".55"/><circle cx="284.8" cy="25.7" r="0.7" fill="#f8d870" opacity=".55"/><circle cx="312.2" cy="93.5" r="0.9" fill="#f8d870" opacity=".55"/><circle cx="265.4" cy="69.8" r="1.4" fill="#8a5010" opacity=".45"/><circle cx="222.3" cy="120.8" r="1.1" fill="#8a5010" opacity=".45"/><circle cx="322.3" cy="67.6" r="1.6" fill="#f8d870" opacity=".55"/><circle cx="258.1" cy="154.8" r="0.8" fill="#f8d870" opacity=".55"/><circle cx="180.1" cy="138.3" r="1.4" fill="#f8d870" opacity=".55"/><circle cx="352.3" cy="72.4" r="1.3" fill="#f8d870" opacity=".55"/><circle cx="291.5" cy="98.9" r="1.4" fill="#8a5010" opacity=".45"/><circle cx="269.7" cy="137.5" r="0.7" fill="#8a5010" opacity=".45"/><circle cx="305.3" cy="198.7" r="1.4" fill="#f8d870" opacity=".55"/><circle cx="251.5" cy="138.4" r="0.6" fill="#f8d870" opacity=".55"/><circle cx="206.6" cy="35.8" r="0.7" fill="#8a5010" opacity=".45"/><circle cx="198.6" cy="60.1" r="1.0" fill="#8a5010" opacity=".45"/><circle cx="188.6" cy="97.5" r="1.1" fill="#8a5010" opacity=".45"/><circle cx="340.8" cy="174.7" r="0.9" fill="#f8d870" opacity=".55"/><circle cx="245.9" cy="178.5" r="1.6" fill="#f8d870" opacity=".55"/><circle cx="208.3" cy="57.1" r="0.8" fill="#f8d870" opacity=".55"/><circle cx="293.4" cy="62.9" r="0.6" fill="#f8d870" opacity=".55"/><circle cx="248.1" cy="119.3" r="1.6" fill="#8a5010" opacity=".45"/><circle cx="278.2" cy="128.9" r="1.3" fill="#f8d870" opacity=".55"/><circle cx="357.3" cy="159.1" r="1.5" fill="#8a5010" opacity=".45"/><circle cx="252.8" cy="88.2" r="0.7" fill="#8a5010" opacity=".45"/><circle cx="184.8" cy="26.5" r="0.8" fill="#f8d870" opacity=".55"/><circle cx="242.1" cy="23.8" r="0.6" fill="#f8d870" opacity=".55"/><circle cx="192.9" cy="81.6" r="0.6" fill="#8a5010" opacity=".45"/><circle cx="298.5" cy="41.6" r="0.9" fill="#f8d870" opacity=".55"/><circle cx="247.0" cy="36.8" r="1.4" fill="#8a5010" opacity=".45"/><circle cx="268.0" cy="104.0" r="0.7" fill="#f8d870" opacity=".55"/><circle cx="242.6" cy="63.2" r="1.4" fill="#f8d870" opacity=".55"/><circle cx="176.8" cy="190.9" r="1.1" fill="#f8d870" opacity=".55"/><circle cx="283.9" cy="19.0" r="1.1" fill="#8a5010" opacity=".45"/><circle cx="349.8" cy="143.5" r="0.9" fill="#f8d870" opacity=".55"/><circle cx="206.4" cy="157.6" r="1.1" fill="#8a5010" opacity=".45"/><circle cx="239.9" cy="55.5" r="1.4" fill="#8a5010" opacity=".45"/><circle cx="347.6" cy="163.9" r="1.4" fill="#8a5010" opacity=".45"/><circle cx="218.7" cy="110.3" r="1.0" fill="#f8d870" opacity=".55"/><circle cx="177.8" cy="66.0" r="0.9" fill="#8a5010" opacity=".45"/><circle cx="369.0" cy="97.2" r="1.5" fill="#8a5010" opacity=".45"/><circle cx="368.7" cy="81.8" r="0.8" fill="#f8d870" opacity=".55"/><circle cx="212.5" cy="52.0" r="1.2" fill="#8a5010" opacity=".45"/><circle cx="345.1" cy="103.2" r="1.3" fill="#8a5010" opacity=".45"/><circle cx="189.5" cy="136.9" r="1.5" fill="#8a5010" opacity=".45"/><circle cx="326.5" cy="102.9" r="0.8" fill="#8a5010" opacity=".45"/><circle cx="240.5" cy="163.0" r="1.6" fill="#f8d870" opacity=".55"/><circle cx="254.7" cy="190.1" r="1.3" fill="#f8d870" opacity=".55"/><circle cx="198.2" cy="42.1" r="1.5" fill="#8a5010" opacity=".45"/><circle cx="202.1" cy="167.7" r="1.6" fill="#8a5010" opacity=".45"/><circle cx="244.2" cy="116.1" r="0.7" fill="#f8d870" opacity=".55"/><circle cx="372.0" cy="134.8" r="1.1" fill="#8a5010" opacity=".45"/><circle cx="261.4" cy="176.1" r="1.4" fill="#f8d870" opacity=".55"/><circle cx="223.9" cy="68.5" r="0.8" fill="#f8d870" opacity=".55"/><circle cx="225.4" cy="91.9" r="0.7" fill="#8a5010" opacity=".45"/><circle cx="244.9" cy="99.2" r="1.2" fill="#8a5010" opacity=".45"/><circle cx="258.6" cy="184.7" r="1.1" fill="#f8d870" opacity=".55"/><circle cx="279.8" cy="17.5" r="1.0" fill="#f8d870" opacity=".55"/><circle cx="172.8" cy="162.6" r="0.8" fill="#f8d870" opacity=".55"/><circle cx="321.4" cy="117.5" r="0.9" fill="#f8d870" opacity=".55"/><circle cx="286.4" cy="159.9" r="0.7" fill="#f8d870" opacity=".55"/><circle cx="223.2" cy="65.5" r="1.4" fill="#f8d870" opacity=".55"/><circle cx="287.7" cy="155.4" r="1.5" fill="#f8d870" opacity=".55"/><circle cx="298.2" cy="108.0" r="1.1" fill="#8a5010" opacity=".45"/><circle cx="265.2" cy="113.2" r="1.1" fill="#8a5010" opacity=".45"/><circle cx="316.0" cy="177.0" r="1.5" fill="#f8d870" opacity=".55"/><circle cx="287.3" cy="189.4" r="1.4" fill="#f8d870" opacity=".55"/><circle cx="197.1" cy="96.2" r="0.7" fill="#f8d870" opacity=".55"/><circle cx="187.1" cy="138.5" r="1.4" fill="#8a5010" opacity=".45"/><circle cx="203.8" cy="147.2" r="1.3" fill="#f8d870" opacity=".55"/><circle cx="353.9" cy="194.0" r="0.8" fill="#8a5010" opacity=".45"/><circle cx="254.0" cy="104.6" r="1.6" fill="#8a5010" opacity=".45"/><circle cx="205.3" cy="94.3" r="1.1" fill="#f8d870" opacity=".55"/><circle cx="212.3" cy="73.2" r="1.3" fill="#f8d870" opacity=".55"/><circle cx="286.1" cy="95.9" r="0.6" fill="#f8d870" opacity=".55"/><circle cx="300.5" cy="109.3" r="0.7" fill="#8a5010" opacity=".45"/><circle cx="334.4" cy="194.7" r="0.7" fill="#f8d870" opacity=".55"/><circle cx="180.2" cy="158.9" r="0.9" fill="#f8d870" opacity=".55"/><circle cx="259.0" cy="183.5" r="1.4" fill="#f8d870" opacity=".55"/><circle cx="202.8" cy="185.0" r="1.2" fill="#8a5010" opacity=".45"/><circle cx="190.4" cy="24.7" r="1.3" fill="#f8d870" opacity=".55"/><circle cx="186.9" cy="188.5" r="1.2" fill="#8a5010" opacity=".45"/><circle cx="189.3" cy="173.3" r="0.7" fill="#8a5010" opacity=".45"/><circle cx="265.5" cy="77.1" r="1.2" fill="#8a5010" opacity=".45"/><circle cx="227.2" cy="38.0" r="1.1" fill="#f8d870" opacity=".55"/><circle cx="194.5" cy="44.0" r="0.7" fill="#f8d870" opacity=".55"/><circle cx="236.3" cy="70.7" r="1.4" fill="#f8d870" opacity=".55"/><circle cx="275.0" cy="47.1" r="0.9" fill="#f8d870" opacity=".55"/><circle cx="223.6" cy="16.9" r="1.3" fill="#f8d870" opacity=".55"/><circle cx="211.0" cy="102.3" r="1.5" fill="#f8d870" opacity=".55"/><circle cx="340.7" cy="94.4" r="1.1" fill="#8a5010" opacity=".45"/><circle cx="253.0" cy="108.2" r="1.3" fill="#8a5010" opacity=".45"/><circle cx="242.6" cy="168.8" r="1.3" fill="#8a5010" opacity=".45"/><circle cx="255.4" cy="78.6" r="0.7" fill="#f8d870" opacity=".55"/><circle cx="186.6" cy="151.8" r="0.9" fill="#f8d870" opacity=".55"/><circle cx="189.4" cy="170.5" r="1.5" fill="#8a5010" opacity=".45"/><circle cx="230.1" cy="59.1" r="0.9" fill="#f8d870" opacity=".55"/><circle cx="204.5" cy="96.9" r="0.9" fill="#8a5010" opacity=".45"/><circle cx="372.4" cy="115.8" r="0.8" fill="#8a5010" opacity=".45"/><circle cx="235.8" cy="80.3" r="0.6" fill="#f8d870" opacity=".55"/><circle cx="269.8" cy="107.5" r="0.8" fill="#f8d870" opacity=".55"/><circle cx="173.0" cy="63.1" r="0.7" fill="#f8d870" opacity=".55"/><circle cx="180.6" cy="18.2" r="0.9" fill="#f8d870" opacity=".55"/><circle cx="292.6" cy="112.4" r="1.4" fill="#8a5010" opacity=".45"/><circle cx="319.5" cy="177.5" r="1.0" fill="#f8d870" opacity=".55"/><circle cx="374.9" cy="41.8" r="1.3" fill="#8a5010" opacity=".45"/><circle cx="181.0" cy="169.4" r="1.5" fill="#8a5010" opacity=".45"/><circle cx="323.2" cy="165.1" r="0.7" fill="#f8d870" opacity=".55"/><circle cx="275.9" cy="169.3" r="1.4" fill="#8a5010" opacity=".45"/><circle cx="292.3" cy="180.1" r="1.3" fill="#8a5010" opacity=".45"/><circle cx="219.4" cy="19.8" r="0.7" fill="#f8d870" opacity=".55"/><circle cx="193.6" cy="169.5" r="1.2" fill="#8a5010" opacity=".45"/><circle cx="301.0" cy="140.6" r="1.1" fill="#f8d870" opacity=".55"/><circle cx="336.3" cy="153.2" r="1.1" fill="#f8d870" opacity=".55"/><circle cx="307.8" cy="26.3" r="1.3" fill="#f8d870" opacity=".55"/><circle cx="187.3" cy="63.4" r="1.3" fill="#f8d870" opacity=".55"/><circle cx="324.4" cy="195.5" r="1.1" fill="#f8d870" opacity=".55"/><circle cx="270.7" cy="141.2" r="1.4" fill="#8a5010" opacity=".45"/><circle cx="304.4" cy="28.4" r="0.7" fill="#f8d870" opacity=".55"/><circle cx="325.1" cy="70.6" r="1.2" fill="#f8d870" opacity=".55"/><circle cx="184.5" cy="64.0" r="1.3" fill="#8a5010" opacity=".45"/><circle cx="311.2" cy="68.1" r="1.1" fill="#f8d870" opacity=".55"/><circle cx="268.1" cy="36.0" r="1.5" fill="#f8d870" opacity=".55"/><circle cx="373.5" cy="188.1" r="0.6" fill="#f8d870" opacity=".55"/><circle cx="340.9" cy="194.1" r="1.0" fill="#f8d870" opacity=".55"/><circle cx="215.2" cy="189.9" r="0.8" fill="#f8d870" opacity=".55"/><circle cx="201.2" cy="111.5" r="1.6" fill="#f8d870" opacity=".55"/><circle cx="341.0" cy="108.6" r="1.5" fill="#8a5010" opacity=".45"/><circle cx="219.7" cy="181.0" r="1.1" fill="#f8d870" opacity=".55"/><circle cx="172.7" cy="105.5" r="1.1" fill="#f8d870" opacity=".55"/><circle cx="201.0" cy="78.0" r="0.9" fill="#8a5010" opacity=".45"/><circle cx="172.4" cy="153.6" r="1.4" fill="#f8d870" opacity=".55"/><circle cx="362.8" cy="146.6" r="1.5" fill="#f8d870" opacity=".55"/><circle cx="248.7" cy="87.1" r="1.6" fill="#f8d870" opacity=".55"/><circle cx="246.3" cy="93.6" r="0.9" fill="#f8d870" opacity=".55"/><circle cx="193.0" cy="169.2" r="0.9" fill="#8a5010" opacity=".45"/><circle cx="223.4" cy="63.4" r="1.1" fill="#f8d870" opacity=".55"/><circle cx="248.9" cy="191.8" r="1.5" fill="#8a5010" opacity=".45"/><circle cx="302.0" cy="183.9" r="1.5" fill="#f8d870" opacity=".55"/><circle cx="320.2" cy="23.2" r="1.3" fill="#f8d870" opacity=".55"/><circle cx="327.0" cy="133.9" r="0.9" fill="#f8d870" opacity=".55"/><circle cx="362.9" cy="37.7" r="1.1" fill="#f8d870" opacity=".55"/><circle cx="233.3" cy="151.5" r="1.6" fill="#f8d870" opacity=".55"/><circle cx="307.1" cy="70.0" r="1.2" fill="#f8d870" opacity=".55"/><circle cx="206.5" cy="44.1" r="0.8" fill="#8a5010" opacity=".45"/><circle cx="274.4" cy="54.9" r="1.5" fill="#8a5010" opacity=".45"/><circle cx="264.7" cy="40.0" r="0.8" fill="#f8d870" opacity=".55"/><circle cx="242.4" cy="30.9" r="0.8" fill="#f8d870" opacity=".55"/><circle cx="289.3" cy="179.0" r="1.3" fill="#f8d870" opacity=".55"/><circle cx="257.3" cy="111.5" r="1.0" fill="#f8d870" opacity=".55"/><circle cx="184.8" cy="65.6" r="1.6" fill="#f8d870" opacity=".55"/><circle cx="275.7" cy="131.1" r="1.5" fill="#f8d870" opacity=".55"/><circle cx="227.8" cy="60.2" r="1.0" fill="#f8d870" opacity=".55"/><circle cx="368.5" cy="171.9" r="1.5" fill="#f8d870" opacity=".55"/><circle cx="178.6" cy="146.0" r="1.5" fill="#f8d870" opacity=".55"/><circle cx="293.0" cy="14.0" r="1.0" fill="#8a5010" opacity=".45"/><circle cx="342.1" cy="173.1" r="1.6" fill="#f8d870" opacity=".55"/><circle cx="194.5" cy="42.7" r="1.1" fill="#8a5010" opacity=".45"/><circle cx="365.9" cy="148.2" r="1.2" fill="#8a5010" opacity=".45"/><circle cx="266.2" cy="116.6" r="0.6" fill="#8a5010" opacity=".45"/><circle cx="219.9" cy="185.1" r="1.2" fill="#f8d870" opacity=".55"/><circle cx="198.4" cy="60.8" r="1.2" fill="#8a5010" opacity=".45"/><circle cx="195.1" cy="27.1" r="1.1" fill="#f8d870" opacity=".55"/><circle cx="251.9" cy="55.6" r="1.2" fill="#f8d870" opacity=".55"/><circle cx="234.1" cy="99.7" r="1.6" fill="#8a5010" opacity=".45"/><circle cx="354.1" cy="102.4" r="0.8" fill="#f8d870" opacity=".55"/><circle cx="369.9" cy="145.1" r="0.9" fill="#f8d870" opacity=".55"/><circle cx="274.7" cy="139.5" r="1.0" fill="#f8d870" opacity=".55"/><circle cx="309.5" cy="186.1" r="0.8" fill="#f8d870" opacity=".55"/><circle cx="241.6" cy="92.2" r="1.3" fill="#f8d870" opacity=".55"/><circle cx="336.2" cy="151.5" r="1.1" fill="#f8d870" opacity=".55"/><circle cx="371.8" cy="72.0" r="1.4" fill="#f8d870" opacity=".55"/><circle cx="217.6" cy="155.4" r="0.9" fill="#8a5010" opacity=".45"/><circle cx="274.1" cy="48.8" r="0.8" fill="#f8d870" opacity=".55"/><circle cx="309.1" cy="190.5" r="0.7" fill="#f8d870" opacity=".55"/><circle cx="215.9" cy="195.2" r="0.7" fill="#f8d870" opacity=".55"/><circle cx="184.4" cy="87.2" r="1.5" fill="#8a5010" opacity=".45"/><circle cx="322.9" cy="199.5" r="1.5" fill="#f8d870" opacity=".55"/><circle cx="210.2" cy="188.1" r="1.3" fill="#f8d870" opacity=".55"/><circle cx="308.9" cy="84.4" r="1.0" fill="#f8d870" opacity=".55"/><circle cx="206.9" cy="14.5" r="0.9" fill="#f8d870" opacity=".55"/><circle cx="368.8" cy="37.0" r="1.6" fill="#f8d870" opacity=".55"/><circle cx="245.5" cy="166.8" r="1.4" fill="#f8d870" opacity=".55"/><circle cx="182.1" cy="102.1" r="1.0" fill="#8a5010" opacity=".45"/><circle cx="211.8" cy="81.8" r="1.5" fill="#f8d870" opacity=".55"/><circle cx="256.6" cy="165.0" r="1.4" fill="#f8d870" opacity=".55"/><circle cx="179.2" cy="25.6" r="1.5" fill="#f8d870" opacity=".55"/><circle cx="325.9" cy="181.1" r="0.9" fill="#f8d870" opacity=".55"/><circle cx="369.3" cy="128.8" r="0.9" fill="#8a5010" opacity=".45"/><circle cx="237.2" cy="65.3" r="0.6" fill="#8a5010" opacity=".45"/><circle cx="360.8" cy="131.9" r="1.5" fill="#f8d870" opacity=".55"/><circle cx="220.2" cy="102.4" r="1.6" fill="#8a5010" opacity=".45"/><circle cx="251.6" cy="60.7" r="1.0" fill="#f8d870" opacity=".55"/><circle cx="363.2" cy="48.0" r="1.4" fill="#8a5010" opacity=".45"/><circle cx="341.5" cy="157.7" r="1.2" fill="#f8d870" opacity=".55"/><circle cx="237.8" cy="81.3" r="1.4" fill="#f8d870" opacity=".55"/><circle cx="212.6" cy="154.0" r="0.8" fill="#f8d870" opacity=".55"/><circle cx="179.0" cy="116.8" r="0.9" fill="#8a5010" opacity=".45"/><circle cx="354.0" cy="197.7" r="0.9" fill="#f8d870" opacity=".55"/><circle cx="191.9" cy="106.7" r="1.3" fill="#f8d870" opacity=".55"/><circle cx="220.2" cy="91.5" r="1.2" fill="#8a5010" opacity=".45"/><circle cx="326.1" cy="171.5" r="1.3" fill="#f8d870" opacity=".55"/><circle cx="345.2" cy="68.6" r="1.2" fill="#f8d870" opacity=".55"/><circle cx="324.0" cy="51.0" r="0.8" fill="#f8d870" opacity=".55"/><circle cx="203.6" cy="178.5" r="1.2" fill="#f8d870" opacity=".55"/><circle cx="253.6" cy="198.6" r="1.1" fill="#f8d870" opacity=".55"/><circle cx="338.5" cy="135.5" r="1.6" fill="#f8d870" opacity=".55"/><circle cx="269.8" cy="166.4" r="1.4" fill="#8a5010" opacity=".45"/><circle cx="180.3" cy="68.6" r="0.7" fill="#f8d870" opacity=".55"/><circle cx="372.4" cy="122.5" r="1.5" fill="#f8d870" opacity=".55"/><circle cx="350.4" cy="97.5" r="0.9" fill="#8a5010" opacity=".45"/><circle cx="366.8" cy="33.7" r="1.2" fill="#8a5010" opacity=".45"/><circle cx="216.8" cy="82.6" r="0.7" fill="#f8d870" opacity=".55"/><circle cx="224.5" cy="125.5" r="1.3" fill="#f8d870" opacity=".55"/><circle cx="174.3" cy="74.9" r="1.3" fill="#f8d870" opacity=".55"/><circle cx="236.3" cy="51.8" r="1.4" fill="#f8d870" opacity=".55"/><circle cx="185.0" cy="32.9" r="1.0" fill="#f8d870" opacity=".55"/><circle cx="303.7" cy="31.0" r="0.8" fill="#8a5010" opacity=".45"/><circle cx="256.4" cy="66.7" r="0.9" fill="#8a5010" opacity=".45"/><circle cx="236.3" cy="119.4" r="1.0" fill="#f8d870" opacity=".55"/><circle cx="350.0" cy="199.4" r="1.0" fill="#f8d870" opacity=".55"/><circle cx="322.0" cy="51.9" r="0.6" fill="#8a5010" opacity=".45"/><circle cx="259.3" cy="166.6" r="1.0" fill="#8a5010" opacity=".45"/><circle cx="266.9" cy="44.2" r="0.6" fill="#f8d870" opacity=".55"/><circle cx="304.0" cy="183.2" r="0.7" fill="#8a5010" opacity=".45"/><circle cx="248.4" cy="107.8" r="0.7" fill="#f8d870" opacity=".55"/><circle cx="279.4" cy="186.1" r="0.7" fill="#f8d870" opacity=".55"/><circle cx="337.8" cy="193.8" r="0.8" fill="#f8d870" opacity=".55"/><circle cx="366.3" cy="195.5" r="1.1" fill="#f8d870" opacity=".55"/><circle cx="362.8" cy="86.1" r="1.5" fill="#8a5010" opacity=".45"/><circle cx="341.9" cy="43.8" r="1.4" fill="#f8d870" opacity=".55"/><circle cx="255.3" cy="171.4" r="1.4" fill="#f8d870" opacity=".55"/><circle cx="216.9" cy="88.4" r="1.1" fill="#f8d870" opacity=".55"/><circle cx="197.3" cy="60.0" r="1.3" fill="#8a5010" opacity=".45"/><circle cx="180.5" cy="118.6" r="1.4" fill="#f8d870" opacity=".55"/><circle cx="344.7" cy="35.9" r="1.2" fill="#f8d870" opacity=".55"/><circle cx="301.2" cy="71.0" r="1.0" fill="#f8d870" opacity=".55"/><circle cx="259.7" cy="136.5" r="1.0" fill="#f8d870" opacity=".55"/><circle cx="176.8" cy="129.1" r="1.1" fill="#f8d870" opacity=".55"/><circle cx="329.3" cy="159.1" r="1.1" fill="#f8d870" opacity=".55"/><circle cx="269.5" cy="33.9" r="0.7" fill="#f8d870" opacity=".55"/><circle cx="190.9" cy="96.2" r="1.1" fill="#f8d870" opacity=".55"/><circle cx="303.1" cy="29.3" r="1.3" fill="#8a5010" opacity=".45"/><circle cx="277.4" cy="24.1" r="1.1" fill="#f8d870" opacity=".55"/><circle cx="367.9" cy="39.3" r="1.5" fill="#8a5010" opacity=".45"/><circle cx="322.8" cy="165.6" r="0.8" fill="#8a5010" opacity=".45"/><circle cx="273.3" cy="191.9" r="1.5" fill="#f8d870" opacity=".55"/><circle cx="334.4" cy="187.1" r="0.7" fill="#f8d870" opacity=".55"/><circle cx="327.8" cy="43.5" r="1.5" fill="#f8d870" opacity=".55"/><circle cx="340.0" cy="40.7" r="1.1" fill="#8a5010" opacity=".45"/><circle cx="214.9" cy="62.9" r="1.1" fill="#f8d870" opacity=".55"/><circle cx="179.6" cy="47.9" r="0.8" fill="#8a5010" opacity=".45"/><circle cx="312.0" cy="180.5" r="0.8" fill="#8a5010" opacity=".45"/><circle cx="195.7" cy="112.7" r="1.2" fill="#f8d870" opacity=".55"/></g>
  <path d="M276 51 L281 110 L285 198 M278 80 L215 45 M279 95 L188 82 M281 130 L205 150 M279 75 L335 40 M280 100 L368 88 M282 140 L345 150" stroke="#9a5a10" stroke-width="1.1" fill="none" opacity=".55"/>
  </svg>
  <!-- controls -->
  <div class="a" style="left:369px;top:0;width:1px;height:20px;background:rgba(255,255,230,.35)"></div>
  <div class="a" style="left:395px;top:0;width:1px;height:20px;background:rgba(255,255,230,.35)"></div>
  <div class="a" style="left:422px;top:0;width:1px;height:20px;background:rgba(255,255,230,.35)"></div>
  <svg class="a" style="left:374px;top:3px" width="16" height="16" viewBox="0 0 16 16"><path d="M15 1 L7 10 L5 8 Z" fill="#fffbe8"/><path d="M5 9 C2 9 2 12 1 14 C4 14 7 13 6 10 Z" fill="#fffbe8"/></svg>
  <div class="a" style="left:403px;top:10px;width:12px;height:3px;background:#fffbe8"></div>
  <svg class="a" style="left:436px;top:4px" width="13" height="11" viewBox="0 0 13 11"><path d="M1.5 1 L11.5 10 M11.5 1 L1.5 10" stroke="#fffbe8" stroke-width="2.4"/></svg>
  <!-- dark band -->
  <div class="a" style="left:0;top:127px;width:458px;height:57px;background:rgba(40,32,8,.5)"></div>
  <div class="a" style="left:10px;top:92px;width:82px;height:82px;background:#f4efe0;border:1px solid #d8d0b8;border-radius:3px"></div>
  <svg class="a" style="left:12px;top:94px" width="78" height="78"><use href="#girl"/></svg>
  <div class="a" style="left:98px;top:90px;color:#fff;font-size:24px;line-height:30px;letter-spacing:0.5px;text-shadow:0 0 2px rgba(0,0,0,.35)">蓝月①号888888</div>
  <div class="a" style="left:294px;top:99px;color:#fff;font-size:14px;line-height:18px;letter-spacing:.3px">5989156</div>
  <svg class="a" style="left:100px;top:133px" width="52" height="16" viewBox="0 0 52 16"><g><circle cx="8" cy="8" r="7.2" fill="#f8c030" stroke="#d88a10" stroke-width="1"/><circle cx="5.5" cy="6.5" r="1" fill="#5a3a00"/><circle cx="10.5" cy="6.5" r="1" fill="#5a3a00"/><path d="M4.5 9.5 Q8 13 11.5 9.5Z" fill="#fff" stroke="#5a3a00" stroke-width=".6"/></g><g transform="translate(17 0)"><circle cx="8" cy="8" r="7.2" fill="#f8c030" stroke="#d88a10" stroke-width="1"/><circle cx="5.5" cy="6.5" r="1" fill="#5a3a00"/><circle cx="10.5" cy="6.5" r="1" fill="#5a3a00"/><path d="M4.5 9.5 Q8 13 11.5 9.5Z" fill="#fff" stroke="#5a3a00" stroke-width=".6"/></g><path d="M42 2 L43.8 5.8 L48 6.2 L44.8 9 L45.8 13.2 L42 11 L38.2 13.2 L39.2 9 L36 6.2 L40.2 5.8Z" fill="#ffd040" stroke="#e8a000" stroke-width=".6"/></svg>
  <svg class="a" style="left:165px;top:132px" width="50" height="20"><use href="#svip"/></svg>
  <div class="a" style="left:102px;top:157px;color:#fff;font-size:12px;line-height:18px;letter-spacing:0px">蓝月180合击国庆大区《普天同庆》火爆开启....</div>
  <div class="a" style="left:357px;top:154px;width:64px;height:20px;background:linear-gradient(#f4f2ec,#dcd8cc);border-radius:2px;color:#222;font-size:12px;line-height:20px;text-align:center">特别关心</div>
  <svg class="a" style="left:431px;top:156px" width="19" height="17" viewBox="0 0 19 17"><path d="M2 1 H17 Q18 1 18 2 V11 Q18 12 17 12 H8 L4 16 V12 H2 Q1 12 1 11 V2 Q1 1 2 1Z" fill="#fff"/><circle cx="6" cy="6.5" r="1.2" fill="#555"/><circle cx="9.5" cy="6.5" r="1.2" fill="#555"/><circle cx="13" cy="6.5" r="1.2" fill="#555"/></svg>
<!-- tabs -->
  <div class="a" style="left:0;top:184px;width:458px;height:31px;background:rgba(30,45,5,.3)"></div>
  <div class="a" style="left:0;top:184px;width:458px;height:1px;background:#f0ecc8;opacity:.9"></div>
  <div class="a" style="left:1px;top:185px;width:69px;height:30px;background:#78b2e2"></div>
  <div class="a" style="left:29px;top:215px;z-index:2;border-left:5px solid transparent;border-right:5px solid transparent;border-top:4px solid #78b2e2"></div>
  <svg class="a" style="left:11px;top:193px" width="19" height="14" viewBox="0 0 19 14"><rect x="0" y="0" width="19" height="14" rx="1.5" fill="#fff"/><circle cx="5.5" cy="5" r="2.4" fill="#78b2e2"/><path d="M1.8 12 C2 8.5 9 8.5 9.2 12Z" fill="#78b2e2"/><rect x="11" y="4" width="6" height="2" fill="#78b2e2"/><rect x="11" y="8" width="6" height="2" fill="#78b2e2"/></svg>
  <div class="a tabt" style="left:35px">资料</div>
  <svg class="a" style="left:81px;top:193px" width="18" height="15" viewBox="0 0 18 15"><rect x="1" y="1" width="13" height="10" fill="none" stroke="#fff" stroke-width="2"/><path d="M3 9 L6 6 L8 8 L10 5 L12 9Z" fill="#fff"/><circle cx="4.5" cy="4" r="1.2" fill="#fff"/><path d="M16 4 V13.5 H4" fill="none" stroke="#fff" stroke-width="2"/></svg>
  <div class="a tabt" style="left:103px">相册</div>
  <svg class="a" style="left:150px;top:194px" width="16" height="12" viewBox="0 0 16 12"><rect x="0" y="0" width="4" height="5" fill="#fff"/><rect x="0" y="7" width="4" height="5" fill="#fff"/><rect x="6" y="0" width="10" height="1.6" fill="#fff"/><rect x="6" y="5" width="10" height="1.6" fill="#fff"/><rect x="6" y="10" width="10" height="1.6" fill="#fff"/></svg>
  <div class="a tabt" style="left:172px">动态</div>
  <svg class="a" style="left:216px;top:192px" width="19" height="17" viewBox="0 0 19 17"><path d="M9.5 16 C4 12 1 9 1 5.5 C1 2.5 3.3 1 5.6 1 C7.5 1 8.8 2.2 9.5 3.4 C10.2 2.2 11.5 1 13.4 1 C15.7 1 18 2.5 18 5.5 C18 9 15 12 9.5 16Z" fill="#fff"/><path d="M3.2 6.5 C3.2 4.5 4.4 3.3 5.8 3.3 C7.4 3.3 8.6 4.8 9.5 6.5 C10.4 4.8 11.6 3.3 13.2 3.3 C14.6 3.3 15.8 4.5 15.8 6.5 C13 5.5 11 8 9.5 8 C8 8 6 5.5 3.2 6.5Z" fill="#5a6a20"/></svg>
  <div class="a tabt" style="left:239px">亲密度</div>
  <svg class="a" style="left:301px;top:191px" width="10" height="15" viewBox="0 0 10 15"><path d="M0 0H10V15L5 10.5L0 15Z" fill="#fff"/></svg>
  <div class="a tabt" style="left:318px">标签</div>
  <svg class="a" style="left:368px;top:191px" width="12" height="17" viewBox="0 0 12 17"><rect x="1" y="1" width="10" height="15" rx="1.5" fill="none" stroke="#fff" stroke-width="2"/><rect x="3" y="3" width="6" height="9" fill="none"/><rect x="5" y="13" width="2" height="1.5" fill="#fff"/></svg>
  <div class="a tabt" style="left:388px">手机</div>
  <!-- content -->
  <div class="a" style="left:0;top:215px;width:458px;height:386px;background:linear-gradient(170deg,#e9e3d0 0,#ece6d6 40%,#eee8dc 100%)"></div>
  <div class="a" style="left:0;top:215px;width:458px;height:386px;background:radial-gradient(ellipse 70px 160px at 10px 120px,rgba(160,170,110,.22),transparent),radial-gradient(ellipse 150px 70px at 370px 40px,rgba(175,160,120,.18),transparent),radial-gradient(ellipse 120px 60px at 120px 60px,rgba(190,180,140,.15),transparent),radial-gradient(ellipse 160px 90px at 230px 300px,rgba(200,195,160,.14),transparent)"></div>
  <div class="a t12" style="left:22px;top:223px;">昵</div>
  <div class="a t12" style="left:51px;top:223px;">称</div>
  <div class="a t12" style="left:63px;top:223px;">：</div>
  <div class="a t12" style="left:87px;top:223px;">蓝月①号</div>
  <div class="a t12" style="left:22px;top:246px;">备</div>
  <div class="a t12" style="left:51px;top:246px;">注</div>
  <div class="a t12" style="left:63px;top:246px;">：</div>
  <div class="a t12" style="left:87px;top:246px;">蓝月①号888888</div>
  <div class="a btn" style="left:183px;top:243px;width:72px;height:21px"><svg class="a" style="left:4px;top:4px" width="13" height="12" viewBox="0 0 13 12"><rect x=".5" y="1.5" width="10" height="10" fill="#e8f0f8" stroke="#7a8aa0"/><path d="M4 9 L11 2 L12.5 3.5 L5.5 10.5 L3.5 11Z" fill="#58b030" stroke="#3a7a20" stroke-width=".6"/></svg><span style="position:absolute;left:19px;top:1px">修改备注</span></div>
  <div class="a t12" style="left:22px;top:271px;">帐</div>
  <div class="a t12" style="left:51px;top:271px;">号</div>
  <div class="a t12" style="left:63px;top:271px;">：</div>
  <div class="a t12" style="left:87px;top:271px;">5989156</div>
  <div class="a t12" style="left:22px;top:298px;">个人说明</div>
  <div class="a t12" style="left:87px;top:294px;line-height:24px">提醒1：登录器右侧添加担保好友 好友修改备注功能 给我随便改<br>个名字（百度搜索如何修改好友备注） 这样只有你自己知道，进<br>讨论组一目了然<br>提醒2：凡是带邮箱后缀的全是骗子</div>
  <div class="a t12" style="left:22px;top:410px;">个</div>
  <div class="a t12" style="left:51px;top:410px;">人</div>
  <div class="a t12" style="left:63px;top:410px;">：</div>
  <div class="a t12" style="left:87px;top:410px;">男</div>
  <div class="a t12" style="left:111px;top:410px;">24岁</div>
  <svg class="a" style="left:149px;top:409px" width="13" height="13" viewBox="0 0 13 13"><path d="M1 4 L3.5 7 L6.5 1.5 L9.5 7 L12 4 L11 11 H2Z" fill="#f5b800" stroke="#e07800" stroke-width="1"/><rect x="2" y="10" width="9" height="2" fill="#f09000"/></svg>
  <div class="a t12" style="left:165px;top:410px;">3月5日(公历生日)</div>
  <div class="a t12" style="left:269px;top:410px;">属马</div>
  <div class="a t12" style="left:305px;top:410px;">双鱼座</div>
  <div class="a t12" style="left:22px;top:455px;">Q</div>
  <div class="a t12" style="left:51px;top:455px;">龄</div>
  <div class="a t12" style="left:63px;top:455px;">：</div>
  <div class="a t12" style="left:87px;top:455px;">13年</div>
  <div class="a t12" style="left:22px;top:490px;color:#222">备注信息</div>
  <div class="a t12" style="left:87px;top:489px;line-height:19px;color:#9a9890">您还没有对 蓝月①号888888 添加备注信息。备注信息可以帮助<br>您记录好友的真实资料、联系方式、事件行为等一系列信息。</div>
  <div class="a btn" style="left:332px;top:531px;width:96px;height:20px"><svg class="a" style="left:4px;top:4px" width="13" height="12" viewBox="0 0 13 12"><rect x=".5" y="1.5" width="10" height="10" fill="#e8f0f8" stroke="#7a8aa0"/><path d="M4 9 L11 2 L12.5 3.5 L5.5 10.5 L3.5 11Z" fill="#58b030" stroke="#3a7a20" stroke-width=".6"/></svg><span style="position:absolute;left:19px;top:0px">添加备注信息</span></div>
  <!-- bottom -->
  <div class="a" style="left:0;top:601px;width:458px;height:78px;background:linear-gradient(180deg,#8a7810 0,#7a6a0a 8px,#6e5e08 70px,#7a6a10 78px)"></div>
  <div class="a" style="left:9px;top:609px;width:441px;height:60px;border-radius:7px;background:rgba(70,58,0,.55);box-shadow:inset 0 0 4px rgba(40,30,0,.4)"></div>
  <svg class="a" style="left:16px;top:614px" width="20" height="20" viewBox="0 0 20 20"><use href="#svip" width="50" height="20"/></svg>
  <svg class="a" style="left:18px;top:645px" width="170" height="18" viewBox="0 0 170 18">
   <path d="M7.5 1 L9.5 5.8 L14.5 6.2 L10.7 9.6 L11.8 14.6 L7.5 12 L3.2 14.6 L4.3 9.6 L0.5 6.2 L5.5 5.8Z" fill="#f8d048" stroke="#d89000" stroke-width=".8"/><text x="5.2" y="11" font-size="5.5" font-family="Liberation Sans" font-weight="bold" fill="#a06000">2</text>
   <rect x="22" y="1" width="16" height="15" rx="1.5" fill="#38a8d0"/><circle cx="29" cy="7.5" r="4" fill="none" stroke="#fff" stroke-width="1.6"/><path d="M25.5 9 V14" stroke="#fff" stroke-width="1.6"/><text x="34" y="17" font-size="6" font-weight="bold" font-family="Liberation Sans" fill="#fff">1</text>
   <ellipse cx="50" cy="9" rx="5" ry="6.5" fill="#1a1a1a"/><ellipse cx="50" cy="11" rx="3.5" ry="4.5" fill="#fff"/><circle cx="48.5" cy="5.5" r="1.2" fill="#fff"/><circle cx="51.5" cy="5.5" r="1.2" fill="#fff"/><path d="M46 13 L50 16 L44 16Z" fill="#e02020"/><rect x="53" y="7" width="8" height="10" rx="1" fill="#f0a020"/><rect x="54.5" y="8.5" width="5" height="5" fill="#6ab0e8"/>
   <rect x="69" y="1" width="16" height="16" rx="2" fill="#1a78e0"/><path d="M72 5 C75 4 79 4 82 5 C82 10 80 13 77 15 C74 13 72 10 72 5Z" fill="none" stroke="#fff" stroke-width="1.6"/><path d="M74 8 L77 11 L80 8" stroke="#fff" stroke-width="1.6" fill="none"/>
   <rect x="91" y="3" width="16" height="12" fill="#e0e8f8" stroke="#8aa0c8" stroke-width=".8"/><path d="M91 3 L99 10 L107 3 M91 15 L97 9 M107 15 L101 9" stroke="#8aa0c8" stroke-width=".8" fill="none"/>
   <path d="M114 4 C114 2 117 1 120 1 L126 3 V15 L120 17 C117 17 114 15 114 13Z" fill="#f0b020"/><path d="M120 1 V17" stroke="#c88000" stroke-width="1.2"/><rect x="123" y="10" width="7" height="7" fill="#f8f0e0"/><text x="124" y="16.5" font-size="7" font-weight="bold" font-family="Liberation Sans" fill="#d07000">6</text>
   <path d="M135 2 H151 V10 C151 14 146 16 143 17 C140 16 135 14 135 10Z" fill="#f0d8b0" stroke="#e08020" stroke-width="1.2"/><path d="M143 4 L144.6 7.8 L148.5 8 L145.5 10.6 L146.5 14.4 L143 12.2 L139.5 14.4 L140.5 10.6 L137.5 8 L141.4 7.8Z" fill="#f07010"/>
  </svg>
 </div>
</div>
</body></html>
